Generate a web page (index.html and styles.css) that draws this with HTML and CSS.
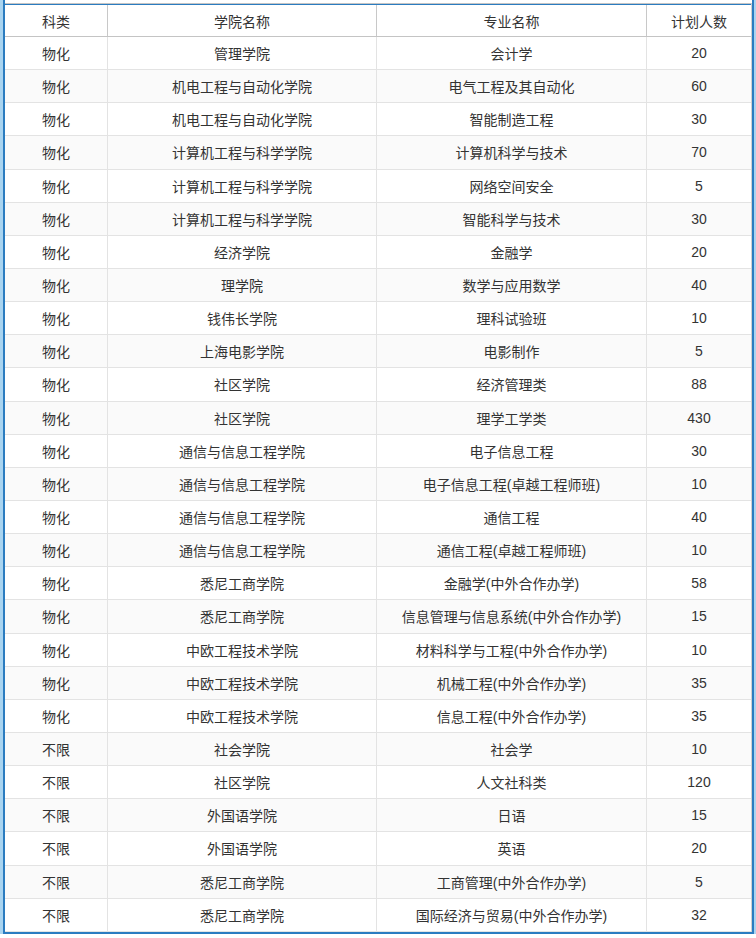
FILE: index.html
```html
<!DOCTYPE html>
<html lang="zh-CN">
<head>
<meta charset="utf-8">
<title>招生计划</title>
<link rel="stylesheet" href="styles.css">
</head>
<body>
<div class="page">
  <div class="frame">
    <div class="table">
      <div class="row head">
        <div class="cell">科类</div><div class="cell">学院名称</div><div class="cell">专业名称</div><div class="cell">计划人数</div>
      </div>
      <div class="row"><div class="cell">物化</div><div class="cell">管理学院</div><div class="cell">会计学</div><div class="cell">20</div></div>
      <div class="row"><div class="cell">物化</div><div class="cell">机电工程与自动化学院</div><div class="cell">电气工程及其自动化</div><div class="cell">60</div></div>
      <div class="row"><div class="cell">物化</div><div class="cell">机电工程与自动化学院</div><div class="cell">智能制造工程</div><div class="cell">30</div></div>
      <div class="row"><div class="cell">物化</div><div class="cell">计算机工程与科学学院</div><div class="cell">计算机科学与技术</div><div class="cell">70</div></div>
      <div class="row"><div class="cell">物化</div><div class="cell">计算机工程与科学学院</div><div class="cell">网络空间安全</div><div class="cell">5</div></div>
      <div class="row"><div class="cell">物化</div><div class="cell">计算机工程与科学学院</div><div class="cell">智能科学与技术</div><div class="cell">30</div></div>
      <div class="row"><div class="cell">物化</div><div class="cell">经济学院</div><div class="cell">金融学</div><div class="cell">20</div></div>
      <div class="row"><div class="cell">物化</div><div class="cell">理学院</div><div class="cell">数学与应用数学</div><div class="cell">40</div></div>
      <div class="row"><div class="cell">物化</div><div class="cell">钱伟长学院</div><div class="cell">理科试验班</div><div class="cell">10</div></div>
      <div class="row"><div class="cell">物化</div><div class="cell">上海电影学院</div><div class="cell">电影制作</div><div class="cell">5</div></div>
      <div class="row"><div class="cell">物化</div><div class="cell">社区学院</div><div class="cell">经济管理类</div><div class="cell">88</div></div>
      <div class="row"><div class="cell">物化</div><div class="cell">社区学院</div><div class="cell">理学工学类</div><div class="cell">430</div></div>
      <div class="row"><div class="cell">物化</div><div class="cell">通信与信息工程学院</div><div class="cell">电子信息工程</div><div class="cell">30</div></div>
      <div class="row"><div class="cell">物化</div><div class="cell">通信与信息工程学院</div><div class="cell">电子信息工程(卓越工程师班)</div><div class="cell">10</div></div>
      <div class="row"><div class="cell">物化</div><div class="cell">通信与信息工程学院</div><div class="cell">通信工程</div><div class="cell">40</div></div>
      <div class="row"><div class="cell">物化</div><div class="cell">通信与信息工程学院</div><div class="cell">通信工程(卓越工程师班)</div><div class="cell">10</div></div>
      <div class="row"><div class="cell">物化</div><div class="cell">悉尼工商学院</div><div class="cell">金融学(中外合作办学)</div><div class="cell">58</div></div>
      <div class="row"><div class="cell">物化</div><div class="cell">悉尼工商学院</div><div class="cell">信息管理与信息系统(中外合作办学)</div><div class="cell">15</div></div>
      <div class="row"><div class="cell">物化</div><div class="cell">中欧工程技术学院</div><div class="cell">材料科学与工程(中外合作办学)</div><div class="cell">10</div></div>
      <div class="row"><div class="cell">物化</div><div class="cell">中欧工程技术学院</div><div class="cell">机械工程(中外合作办学)</div><div class="cell">35</div></div>
      <div class="row"><div class="cell">物化</div><div class="cell">中欧工程技术学院</div><div class="cell">信息工程(中外合作办学)</div><div class="cell">35</div></div>
      <div class="row"><div class="cell">不限</div><div class="cell">社会学院</div><div class="cell">社会学</div><div class="cell">10</div></div>
      <div class="row"><div class="cell">不限</div><div class="cell">社区学院</div><div class="cell">人文社科类</div><div class="cell">120</div></div>
      <div class="row"><div class="cell">不限</div><div class="cell">外国语学院</div><div class="cell">日语</div><div class="cell">15</div></div>
      <div class="row"><div class="cell">不限</div><div class="cell">外国语学院</div><div class="cell">英语</div><div class="cell">20</div></div>
      <div class="row"><div class="cell">不限</div><div class="cell">悉尼工商学院</div><div class="cell">工商管理(中外合作办学)</div><div class="cell">5</div></div>
      <div class="row"><div class="cell">不限</div><div class="cell">悉尼工商学院</div><div class="cell">国际经济与贸易(中外合作办学)</div><div class="cell">32</div></div>
    </div>
  </div>
</div>
</body>
</html>
```

FILE: styles.css
```css
html, body {
  margin: 0;
  padding: 0;
  background: #ffffff;
}

body {
  font-family: "Liberation Sans", "Noto Sans CJK SC", sans-serif;
  font-size: 14px;
  color: #333333;
}

.page {
  width: 756px;
  height: 934px;
  box-sizing: border-box;
  border-left: 3px solid #a9d4f0;
  border-right: 2px solid #a9d4f0;
}

.frame {
  height: 100%;
  box-sizing: border-box;
  border-left: 2px solid #2b7cc0;
  border-right: 2px solid #2b7cc0;
  border-bottom: 2px solid #2b7cc0;
  padding-top: 3px;
  display: flex;
  flex-direction: column;
}

.table {
  flex: 1;
  display: flex;
  flex-direction: column;
  border-top: 1px solid #c4c4c4;
  border-right: 1px solid #d0d0d0;
}

.row {
  flex: 1 1 0;
  display: grid;
  grid-template-columns: 103px 269px 270px 104px;
  border-bottom: 1px solid #e3e3e3;
}

.row:nth-child(odd) {
  background: #fafafa;
}

.row.head {
  flex: 0 0 33px;
  box-sizing: border-box;
  background: #ffffff;
  border-top: 1px solid #2b7cc0;
  border-bottom: 1px solid #c4c4c4;
}

.cell {
  display: flex;
  align-items: center;
  justify-content: center;
  border-right: 1px solid #e3e3e3;
  white-space: nowrap;
}

.cell:last-child {
  border-right: none;
}

.head .cell {
  border-right-color: #c8c8c8;
}

.head .cell:last-child {
  border-right: none;
}
```
